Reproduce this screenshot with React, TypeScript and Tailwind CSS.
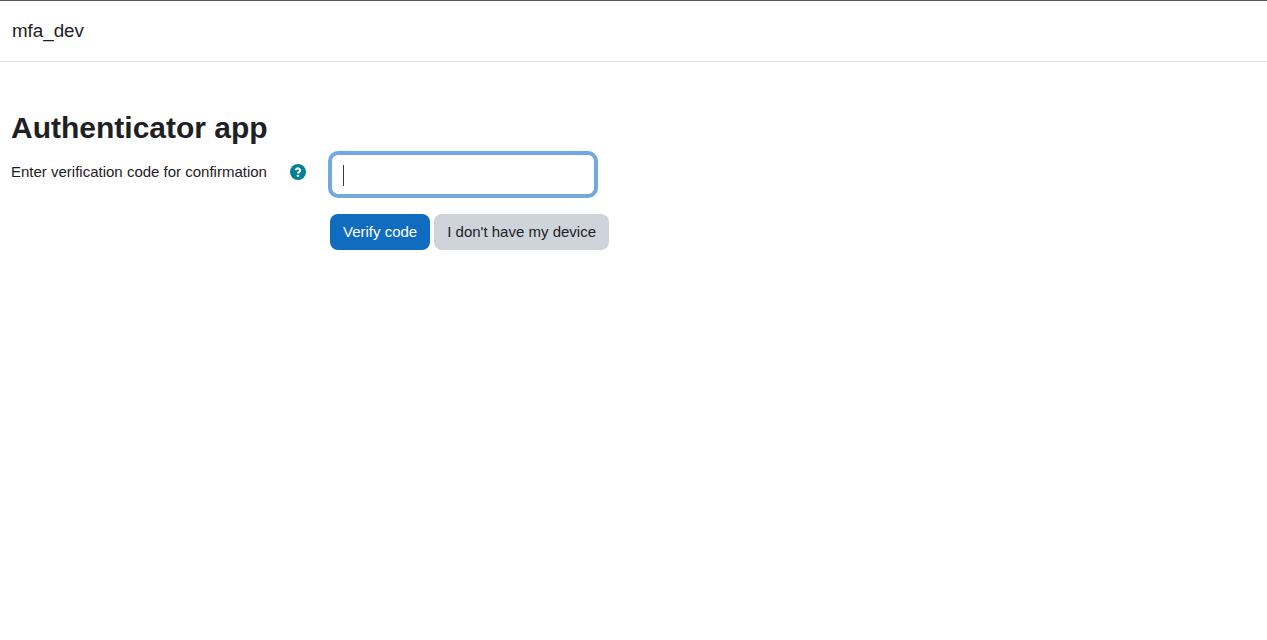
import React from 'react';

function HelpIcon() {
  return (
    <svg width="16" height="16" viewBox="0 0 16 16" className="block">
      <circle cx="8" cy="8" r="8" fill="#008196" />
      <path d="M5.9 6.3a2.1 1.9 0 1 1 3.4 1.5c-.9.6-1.3.8-1.3 1.7" fill="none" stroke="#fff" strokeWidth="2.1" />
      <rect x="6.9" y="10.7" width="2.2" height="2.1" rx="0.5" fill="#fff" />
    </svg>
  );
}

export default function App() {
  return (
    <div className="min-h-screen bg-white text-[15px] text-[#1d2125] font-['Liberation_Sans',Arial,sans-serif]">
      <header className="h-[62px] border-t border-b border-t-[#5a5a5a] border-b-[#e3e3e3] flex items-center pl-3 pb-[1px]">
        <span className="text-[18.75px] leading-[27px]">mfa_dev</span>
      </header>

      <main className="pl-[11px] pt-[48px]">
        <h2 className="text-[30px] leading-[36px] font-bold mb-[7px]">Authenticator app</h2>

        <div className="flex">
          <div className="w-[319px] flex pt-[8px]">
            <label className="w-[279px] leading-[22px]">Enter verification code for confirmation</label>
            <div className="pt-[3px]">
              <HelpIcon />
            </div>
          </div>

          <div className="flex flex-col gap-[18px]">
            <div className="relative w-[266px] h-[43px]">
              <input
                type="text"
                className="w-full h-full bg-white rounded-[8px] border-2 border-[#73a7de] shadow-[0_0_0_2px_#73a7de] outline-none caret-transparent"
              />
              <span className="absolute left-[13px] top-[12px] w-px h-[21px] bg-[#343a40]" />
            </div>

            <div className="flex gap-1">
              <button className="h-[36px] px-[13px] rounded-[8px] bg-[#0f6cbf] text-white">Verify code</button>
              <button className="h-[36px] px-[13px] rounded-[8px] bg-[#ced4da] text-[#1d2125]">I don't have my device</button>
            </div>
          </div>
        </div>
      </main>
    </div>
  );
}
